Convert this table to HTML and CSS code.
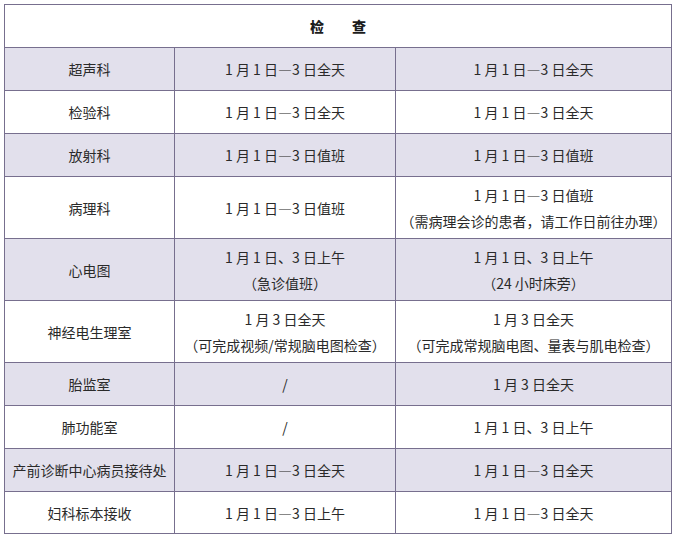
FILE: index.html
```html
<!DOCTYPE html>
<html lang="zh">
<head>
<meta charset="utf-8">
<link rel="stylesheet" href="styles.css">
</head>
<body>
<div class="wrap">
<table class="sched">
  <colgroup><col class="c1"><col class="c2"><col class="c3"></colgroup>
  <tr class="head"><td colspan="3"><b>检&emsp;&emsp;查</b></td></tr>
  <tr class="alt"><td>超声科</td><td>1 月 1 日—3 日全天</td><td>1 月 1 日—3 日全天</td></tr>
  <tr><td>检验科</td><td>1 月 1 日—3 日全天</td><td>1 月 1 日—3 日全天</td></tr>
  <tr class="alt"><td>放射科</td><td>1 月 1 日—3 日值班</td><td>1 月 1 日—3 日值班</td></tr>
  <tr class="tall"><td>病理科</td><td>1 月 1 日—3 日值班</td><td>1 月 1 日—3 日值班<br>（需病理会诊的患者，请工作日前往办理）</td></tr>
  <tr class="alt tall"><td>心电图</td><td>1 月 1 日、3 日上午<br>（急诊值班）</td><td>1 月 1 日、3 日上午<br>（24 小时床旁）</td></tr>
  <tr class="tall"><td>神经电生理室</td><td>1 月 3 日全天<br>（可完成视频/常规脑电图检查）</td><td>1 月 3 日全天<br>（可完成常规脑电图、量表与肌电检查）</td></tr>
  <tr class="alt"><td>胎监室</td><td>/</td><td>1 月 3 日全天</td></tr>
  <tr><td>肺功能室</td><td>/</td><td>1 月 1 日、3 日上午</td></tr>
  <tr class="alt"><td>产前诊断中心病员接待处</td><td>1 月 1 日—3 日全天</td><td>1 月 1 日—3 日全天</td></tr>
  <tr class="last"><td>妇科标本接收</td><td>1 月 1 日—3 日上午</td><td>1 月 1 日—3 日全天</td></tr>
</table>
</div>
</body>
</html>
```
FILE: styles.css
```css
html, body {
  margin: 0;
  padding: 0;
  background: #ffffff;
}
.wrap {
  padding: 4px 5px 0 4px;
}
.sched {
  border-collapse: collapse;
  width: 667px;
  table-layout: fixed;
  font-family: "Noto Sans CJK SC", "Microsoft YaHei", sans-serif;
  font-size: 14px;
  color: #2a2a2a;
}
.c1 { width: 170px; }
.c2 { width: 221px; }
.c3 { width: 276px; }
.sched td {
  border: 1px solid #776f8e;
  text-align: center;
  vertical-align: middle;
  height: 43px;
  padding: 0 2px;
  line-height: 26px;
  box-sizing: border-box;
}
.sched tr.tall td {
  height: 62px;
}
.sched tr.last td {
  height: 42px;
}
.sched tr.head td {
  height: 43px;
  font-weight: bold;
  color: #1c1c1c;
}
.sched tr.alt td {
  background: #e2e0ec;
}
```
